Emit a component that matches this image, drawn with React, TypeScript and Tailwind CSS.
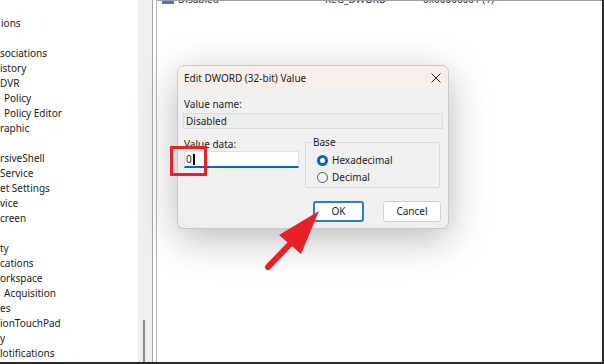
import React from "react";

const tree: { t: string; ml: number }[] = [
  { t: "ions", ml: 1 },
  { t: "", ml: 0 },
  { t: "sociations", ml: 0 },
  { t: "istory", ml: 0 },
  { t: "DVR", ml: 0 },
  { t: "Policy", ml: 4 },
  { t: "Policy Editor", ml: 4 },
  { t: "raphic", ml: 0 },
  { t: "", ml: 0 },
  { t: "rsiveShell", ml: 0 },
  { t: "Service", ml: 0 },
  { t: "et Settings", ml: 0 },
  { t: "vice", ml: 0 },
  { t: "creen", ml: 0 },
  { t: "", ml: 0 },
  { t: "ty", ml: 0 },
  { t: "cations", ml: 0 },
  { t: "orkspace", ml: 0 },
  { t: "Acquisition", ml: 4 },
  { t: "es", ml: 0 },
  { t: "ionTouchPad", ml: 0 },
  { t: "y", ml: 0 },
  { t: "lotifications", ml: 0 },
];

export default function App() {
  const font = { fontFamily: '"Noto Sans", "Open Sans", Arial, sans-serif' };
  return (
    <div
      className="relative w-[604px] h-[364px] overflow-hidden bg-white flex border-r-2 border-b-2 border-[#2b2b2b] text-[#1b1b1b]"
      style={font}
    >
      {/* tree */}
      <div className="w-[138px] shrink-0 pt-[16px] overflow-hidden">
        {tree.map((r, i) => (
          <div
            key={i}
            className="h-[15px] leading-[15px] text-[10px] whitespace-nowrap"
            style={{ marginLeft: r.ml }}
          >
            {r.t}
          </div>
        ))}
      </div>
      {/* scrollbar */}
      <div className="w-[14px] shrink-0 bg-[#efefef] relative">
        <div className="absolute left-[5px] top-[320px] w-[2px] h-[50px] bg-[#8a8a8a]" />
      </div>
      <div className="w-px bg-[#a8a8a8] shrink-0" />
      <div className="w-[3px] bg-white shrink-0" />
      <div className="w-px bg-[#b4b4b4] shrink-0" />
      {/* right list */}
      <div className="flex-1 border-t border-[#a0a0a0] relative overflow-hidden">
        <div className="flex items-center h-[16px] -mt-[10px] text-[10px] text-[#333]">
          <div className="ml-[5px] w-[12px] h-[10px] bg-[#3b7ed8] text-white text-[6px] leading-[10px] text-center font-bold">110</div>
          <div className="ml-[4px] w-[147px]">Disabled</div>
          <div className="w-[98px]">REG_DWORD</div>
          <div>0x00000001 (1)</div>
        </div>
      </div>

      {/* dialog */}
      <div className="absolute left-[177px] top-[65px] w-[272px] h-[164px] rounded-[7px] border border-[#c8c8c8] bg-[#f0f0f0] shadow-[0_10px_40px_rgba(0,0,0,0.28)] overflow-hidden flex flex-col text-[10px]">
        <div className="h-[24px] bg-[#f8efea] flex items-center justify-between pl-[6px] pr-[7px] shrink-0">
          <span>Edit DWORD (32-bit) Value</span>
          <svg width="10" height="10" viewBox="0 0 10 10">
            <path d="M0.5 0.5 L9.5 9.5 M9.5 0.5 L0.5 9.5" stroke="#222" strokeWidth="1" />
          </svg>
        </div>
        <div className="px-[5px] pt-[7px] flex flex-col">
          <div className="pl-[1px] h-[14px] leading-[14px]">Value name:</div>
          <div className="mt-[2px] h-[16px] border border-[#dadada] bg-[#ececec] pl-[2px] leading-[14px]">Disabled</div>
          <div className="flex mt-[8px]">
            <div className="w-[122px] flex flex-col">
              <div className="pl-[1px] h-[14px] leading-[14px]">Value data:</div>
              <div className="ml-[1px] w-[115px] h-[17px] bg-white border border-[#e0e0e0] border-b-2 border-b-[#0a63c4] flex items-center pl-[1px]">
                <span>0</span>
                <span className="w-[2px] h-[11px] bg-black ml-[1px]" />
              </div>
            </div>
            <div className="relative mt-[5px] w-[135px] h-[46px] border border-[#d8d8d8] rounded-[2px]">
              <span className="absolute -top-[7px] left-[6px] bg-[#f0f0f0] px-[1px] leading-[12px]">Base</span>
              <div className="absolute left-[11px] top-[10px] flex items-center gap-[4px]">
                <span className="w-[11px] h-[11px] rounded-full bg-[#0a63c4] flex items-center justify-center">
                  <span className="w-[5px] h-[5px] rounded-full bg-white" />
                </span>
                <span>Hexadecimal</span>
              </div>
              <div className="absolute left-[11px] top-[27px] flex items-center gap-[4px]">
                <span className="w-[11px] h-[11px] rounded-full border border-[#555] bg-[#f5f5f5]" />
                <span>Decimal</span>
              </div>
            </div>
          </div>
          <div className="flex mt-[13px] ml-[130px] gap-[19px]">
            <div className="w-[51px] h-[21px] bg-white border-2 border-[#2c7bd0] rounded-[3px] flex items-center justify-center">OK</div>
            <div className="w-[58px] h-[21px] bg-white border border-[#d0d0d0] rounded-[3px] flex items-center justify-center">Cancel</div>
          </div>
        </div>
      </div>

      {/* red highlight */}
      <div className="absolute left-[170px] top-[146px] w-[37px] h-[30px] border-[3px] border-[#e8202a]" />

      {/* arrow */}
      <svg className="absolute left-0 top-0" width="604" height="364" viewBox="0 0 604 364">
        <line x1="268" y1="267" x2="293" y2="241" stroke="#e8202a" strokeWidth="6" strokeLinecap="round" />
        <polygon points="319,211 279,235 301,254" fill="#e8202a" />
      </svg>
    </div>
  );
}
